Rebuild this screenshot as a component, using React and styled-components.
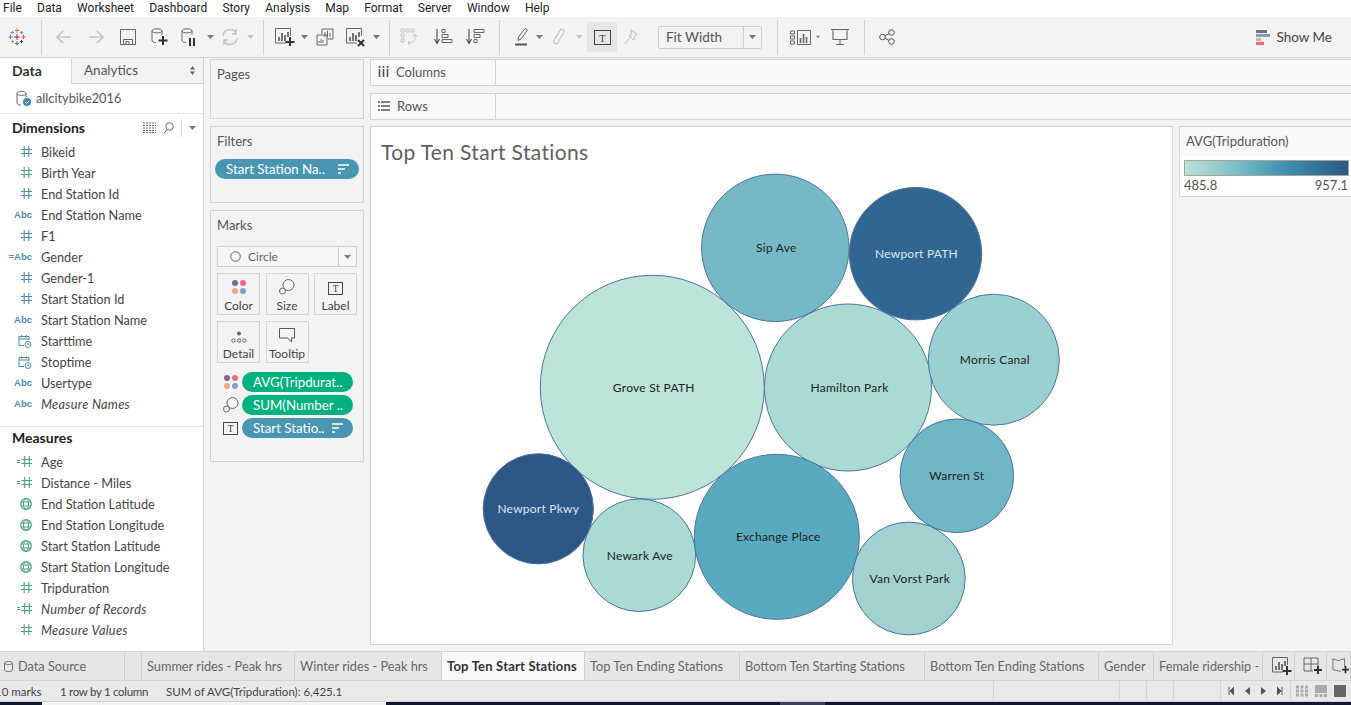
import React from "react";
import styled, { createGlobalStyle } from "styled-components";

const Global = createGlobalStyle`
  html, body { margin: 0; padding: 0; background: #f3f3f3; }
  * { box-sizing: border-box; }
  body { font-family: "Lato", "Open Sans", sans-serif; color: #444; overflow: hidden; }
`;

const Page = styled.div`
  width: 1351px; height: 705px; display: flex; flex-direction: column; overflow: hidden; background: #f3f3f3;
`;
const MenuBar = styled.div`
  height: 17px; background: #fff; display: flex; align-items: center; padding-left: 3px; gap: 15.2px; flex: none;
  font: 12px/17px "Roboto", "Open Sans", sans-serif; color: #222;
`;
const Toolbar = styled.div`
  height: 41px; background: #f3f3f3; border-bottom: 1px solid #d4d4d4; display: flex; align-items: center; flex: none;
`;
const Tool = styled.div`
  width: ${p => p.$w}px; height: 30px; flex: none; display: flex; align-items: center; justify-content: center;
  margin-left: ${p => p.$ml || 0}px; background: ${p => (p.$on ? "#e6e6e6" : "transparent")};
`;
const Sep = styled.div`
  width: 1px; height: 35px; background: #d2d2d2; flex: none; margin: 0 ${p => p.$r || 0}px 0 ${p => p.$l || 0}px;
`;
const FitBox = styled.div`
  width: 104px; height: 23px; margin-left: 13px; border: 1px solid #cfcfcf; border-radius: 2px; display: flex; align-items: center; flex: none;
  font-size: 13.5px; color: #555; padding-left: 7px;
`;
const FitLabel = styled.span`flex: 1;`;
const FitArrow = styled.span`
  width: 18px; height: 21px; border-left: 1px solid #cfcfcf; display: flex; align-items: center; justify-content: center; flex: none;
`;
const ShowMe = styled.div`
  margin-left: auto; margin-right: 19px; display: flex; align-items: center; gap: 6px; font-size: 13.5px; color: #444;
`;
const Main = styled.div`flex: 1; display: flex; min-height: 0;`;

const DataPane = styled.div`
  width: 204px; flex: none; background: #fff; border-right: 1px solid #d4d4d4; display: flex; flex-direction: column;
`;
const PaneTabs = styled.div`height: 26px; display: flex; flex: none; background: #f3f3f3;`;
const PaneTab = styled.div`
  height: 26px; display: flex; align-items: center; padding-bottom: 1px;
  ${p => p.$active
    ? `width: 72px; background: #fff; font-size: 14px; font-weight: 700; color: #333; padding-left: 12px; border-right: 1px solid #d4d4d4;`
    : `flex: 1; padding-left: 12px; padding-right: 8px; justify-content: space-between; font-size: 13.5px; color: #555; border-bottom: 1px solid #d4d4d4;`}
`;
const SourceRow = styled.div`
  height: 30px; display: flex; align-items: center; gap: 4px; padding: 0 0 1px 16px; border-bottom: 1px solid #e6e6e6; font-size: 12.75px; color: #555; flex: none;
`;
const SectionHead = styled.div`
  height: ${p => p.$h}px; display: flex; align-items: center; padding: 0 7px ${p => p.$pb || 0}px 12px; font-size: 14px; font-weight: 700; color: #222; flex: none;
`;
const HeadTools = styled.div`margin-left: auto; display: flex; align-items: center; gap: 7px;`;
const HeadSep = styled.span`width: 1px; height: 18px; background: #d8d8d8;`;
const Fields = styled.div`display: flex; flex-direction: column;`;
const Field = styled.div`
  height: 21px; display: flex; align-items: center; font-size: 12.75px; color: #444;
  font-style: ${p => (p.$italic ? "italic" : "normal")}; letter-spacing: ${p => (p.$italic ? ".3px" : "0")};
`;
const FieldIcon = styled.span`
  width: 41px; padding-right: 9px; flex: none; display: flex; justify-content: flex-end; align-items: center;
`;
const AbcIcon = styled.span`
  font: 700 9.5px "Liberation Sans", sans-serif; color: #4f8ca5; font-style: normal; letter-spacing: 0;
`;
const Divider = styled.div`height: 1px; background: #e6e6e6; margin-top: 12px; flex: none;`;

const CardsCol = styled.div`
  width: 154px; margin-left: 6px; flex: none; padding-top: 1px; display: flex; flex-direction: column; gap: 7px;
`;
const Card = styled.div`
  height: ${p => p.$h}px; flex: none; background: #f3f3f3; border: 1px solid #d4d4d4; padding: 6px 6px 0 6px;
`;
const CardTitle = styled.div`font-size: 13px; color: #555; height: 17px; line-height: 17px;`;
const Pill = styled.div`
  height: 20px; border-radius: 10px; background: ${p => (p.$green ? "#00b180" : "#4996b2")}; color: #fff;
  display: flex; align-items: center; justify-content: space-between; padding: 0 10px 0 11px; font-size: 13.3px; white-space: nowrap; flex: 1;
`;
const FilterPill = styled(Pill)`margin: 9px -2px 0 -2px;`;
const MarkSelect = styled.div`
  height: 21px; margin: 12px 0 6px; border: 1px solid #cfcfcf; display: flex; align-items: center; font-size: 12px; color: #666; padding-left: 12px; gap: 7px; background: #f6f6f6;
`;
const MarkArrow = styled.span`
  margin-left: auto; width: 18px; height: 19px; border-left: 1px solid #cfcfcf; display: flex; align-items: center; justify-content: center;
`;
const MarkGrid = styled.div`display: grid; grid-template-columns: 43px 43px 43px; column-gap: 5.5px; row-gap: 6px;`;
const MarkButton = styled.div`
  height: 42px; border: 1px solid #d4d4d4; display: flex; flex-direction: column; align-items: center; justify-content: flex-end; padding-bottom: 1px;
  font-size: 12px; color: #444; gap: 3px;
`;
const PillRows = styled.div`display: flex; flex-direction: column; gap: 3px; margin: 9px 4px 0 0;`;
const PillRow = styled.div`display: flex; align-items: center; gap: 3px;`;
const PillIcon = styled.span`width: 22px; flex: none; display: flex; justify-content: center; padding-left: 5px;`;

const Work = styled.div`flex: 1; margin-left: 6px; padding-top: 1px; display: flex; flex-direction: column; min-width: 0;`;
const Shelf = styled.div`
  height: 27px; flex: none; background: #f9f9f9; border: 1px solid #d4d4d4; border-right: 0; display: flex; margin-bottom: 7px;
`;
const ShelfLabel = styled.div`
  width: 125px; flex: none; border-right: 1px solid #d4d4d4; display: flex; align-items: center; gap: 7px; padding: 0 0 2px 7px; font-size: 13px; color: #555;
`;
const ViewRow = styled.div`display: flex; flex: none; margin-top: -1px;`;
const Canvas = styled.div`
  width: 803px; height: 519px; flex: none; background: #fff; border: 1px solid #d4d4d4; position: relative;
`;
const ViewTitle = styled.div`
  font-size: 21px; color: #5f5f5f; padding: 12px 0 0 10px; line-height: 26px; letter-spacing: .35px;
`;
const ChartSvg = styled.svg`position: absolute; left: 0; top: 0;`;
const ChartLabel = styled.text`
  font: 12px "Lato", sans-serif; letter-spacing: .25px; text-anchor: middle; dominant-baseline: central;
`;
const Legend = styled.div`
  margin-left: 6px; flex: 1; height: 71px; background: #fff; border: 1px solid #d4d4d4; border-right: 0;
`;
const LegendTitle = styled.div`
  height: 29px; background: #f9f9f9; font-size: 13px; color: #555; padding-left: 6px; line-height: 29px;
`;
const LegendBar = styled.div`
  height: 16px; margin: 4px 2px 0 4px; border: 1px solid #a9a596;
  background: linear-gradient(90deg, #bce4d9 0%, #7fc0c9 30%, #3f93b0 60%, #2c5885 100%);
`;
const LegendScale = styled.div`
  display: flex; justify-content: space-between; padding: 1px 3px 0 4px; font-size: 13px; color: #555; line-height: 16px;
`;

const Tabs = styled.div`
  height: 30px; flex: none; display: flex; background: #e6e6e6; border-top: 1px solid #d4d4d4; border-bottom: 1px solid #d4d4d4;
`;
const SheetTab = styled.div`
  width: ${p => p.$w}px; flex: none; display: flex; align-items: center; gap: 5px; padding-left: ${p => p.$pl ?? 5}px;
  border-right: 1px solid #d0d0d0; white-space: nowrap; overflow: hidden;
  font-size: ${p => (p.$active ? "13px" : "12.75px")}; letter-spacing: ${p => (p.$active ? ".2px" : "0")};
  color: ${p => (p.$active ? "#333" : "#666")}; font-weight: ${p => (p.$active ? 700 : 400)};
  background: ${p => (p.$active ? "#f9f9f9" : "transparent")};
`;
const Status = styled.div`
  height: 21px; flex: none; display: flex; align-items: center; background: #e9e9e9; font-size: 11.5px; color: #444; border-bottom: 1px solid #d0d0d0; overflow: hidden;
`;
const StatusText = styled.span`
  white-space: nowrap; width: ${p => p.$w}px; flex: none; margin-left: ${p => p.$ml || 0}px; letter-spacing: ${p => p.$ls || 0}px;
`;
const StatusSpacer = styled.div`flex: 1;`;
const StatusCell = styled.div`
  width: ${p => p.$w}px; height: 100%; border-left: 1px solid #d6d6d6; flex: none; display: flex; align-items: center; justify-content: center; gap: ${p => p.$gap || 0}px;
`;
const Footer = styled.div`height: 3px; flex: none; display: flex;`;
const FooterPart = styled.div`width: ${p => p.$w}px; background: ${p => p.$c}; flex: ${p => (p.$w ? "none" : 1)};`;

const D = "#666";
const L = "#c4c4c4";
const Svg = ({ w = 20, h = 20, children, ...r }) => (
  <svg width={w} height={h} viewBox={`0 0 ${w} ${h}`} fill="none" {...r}>{children}</svg>
);
const Caret = ({ c = "#777" }) => <Svg w={7} h={4}><path d="M0 0h7L3.500 4z" fill={c} /></Svg>;

const Logo = () => (
  <Svg w={18} h={18}>
    {[[9, 2.5, 2.2, "#e8762c"], [9, 15.5, 2.2, "#5b6591"], [2.5, 9, 2.2, "#59879b"], [15.5, 9, 2.2, "#e15759"], [9, 9, 2.8, "#c72035"], [4.5, 4.5, 1.6, "#7099a6"], [13.5, 4.5, 1.6, "#7099a6"], [4.5, 13.5, 1.6, "#eb912b"], [13.5, 13.5, 1.6, "#1f447e"]].map(([x, y, s, c], i) => (
      <path key={i} d={`M${x - s} ${y}h${2 * s}M${x} ${y - s}v${2 * s}`} stroke={c} strokeWidth="1" />
    ))}
  </Svg>
);
const Arrow = ({ flip }) => (
  <Svg w={18} h={14}>
    <path d={flip ? "M2 7h14M10 1l6 6-6 6" : "M16 7H2M8 1 2 7l6 6"} stroke={L} strokeWidth="1.700" />
  </Svg>
);
const Save = () => (
  <Svg w={18} h={18}><path d="M1.500 1.500h15v15h-15zM4.500 16.500v-5h9v5M7 16.500v-3h3v3" stroke={D} strokeWidth="1" /></Svg>
);
const Can = ({ badge }) => (
  <Svg w={20} h={20}>
    <path d="M2 4c0-3 10-3 10 0v4M2 4c0 2.500 10 2.500 10 0M2 4v9c0 2 2 2.500 4 2.500" stroke={D} strokeWidth="1" />
    {badge === "plus" && <path d="M13 9v9M8.500 13.500h9" stroke="#333" strokeWidth="2" />}
    {badge === "pause" && <path d="M10 11v8M14 11v8" stroke="#333" strokeWidth="2" />}
  </Svg>
);
const Refresh = () => (
  <Svg w={20} h={20}><path d="M3 9a7 7 0 0 1 13-3M17 11a7 7 0 0 1-13 3M16 2v5h-4M4 18v-5h4" stroke={L} strokeWidth="1.500" /></Svg>
);
const Chart = ({ x }) => (
  <Svg w={22} h={20}>
    <path d="M12 16H1.500V1.500h15V9" stroke={D} strokeWidth="1" />
    <path d="M5 14v-4M8 14V6M11 14V8M14 10V5" stroke="#555" strokeWidth="1.600" />
    {x ? <path d="m13 13 6 6m0-6-6 6" stroke="#333" strokeWidth="2" /> : <path d="M16 10v9M11.500 15h9" stroke="#333" strokeWidth="2" />}
  </Svg>
);
const Dup = () => (
  <Svg w={18} h={18}>
    <path d="M6 6V1h11v10h-5" stroke={D} /><path d="M1 7h10v10H1z" fill="#f3f3f3" stroke={D} />
    <path d="M9 9V4M11.500 9V2.500M14 9V5M3 15v-2M5 15v-4M7 15v-3" stroke={D} />
  </Svg>
);
const Swap = () => (
  <Svg w={20} h={20}>
    <path d="M1 2h3v3H1zM6 2h3v3H6zM11 2h3v3h-3zM1 7h3v3H1zM1 12h3v3H1z" stroke={L} />
    <path d="M15 8a6 6 0 0 1-6 8M17 10l-2-3-2 3M10 14l-2 2 2 2" stroke={L} />
  </Svg>
);
const Sort = ({ asc }) => (
  <Svg w={20} h={18}>
    <path d="M3 1v14M0.500 11 3 15.500 5.500 11" stroke="#555" strokeWidth="1.200" />
    {asc
      ? <path d="M8 1.500h3v3H8zM8 6.500h6v3H8zM8 11.500h10v3H8z" stroke="#666" />
      : <path d="M8 1.500h10v3H8zM8 6.500h6v3H8zM8 11.500h3v3H8z" stroke="#666" />}
  </Svg>
);
const Marker = () => (
  <Svg w={14} h={20}>
    <path d="M10 1.500 12.500 3 6 12l-3 1.500L3.500 10z" stroke="#666" />
    <path d="M0 17.500h12" stroke="#555" strokeWidth="2" />
  </Svg>
);
const Clip = () => (
  <Svg w={14} h={18}><path d="M2.500 11 8 2.500c1.500-2.200 5-.500 3.700 2L6 14.500c-1.500 2.500-5.500.800-4.200-2L7 4.500" stroke={L} strokeWidth="1.200" /></Svg>
);
const TBox = ({ s = 17, c = "#444" }) => (
  <Svg w={s} h={s - 2}>
    <rect x=".5" y=".5" width={s - 1} height={s - 3} stroke={c} />
    <text x={s / 2} y={s - 5.500} textAnchor="middle" fontFamily="Liberation Serif, serif" fontSize={s * .62} fill={c}>T</text>
  </Svg>
);
const Pin = () => (
  <Svg w={14} h={16}><path d="M7 1l6 4-2 1-1 4 0 1-5-4 2-.500zM5.500 9 1 15" stroke="#bbb" /></Svg>
);
const ShowMeSmall = () => (
  <Svg w={21} h={15}>
    <path d="M.500 1h4v3h-4zM.500 6h4v3h-4zM.500 11h4v3h-4zM7.500.500h13v14h-13z" stroke={D} />
    <path d="M10.500 13V8M13.500 13V4M16.500 13V7" stroke={D} strokeWidth="1.600" />
  </Svg>
);
const Present = () => (
  <Svg w={18} h={18}><path d="M0 1.500h18M2 1.500v10h14v-10M9 11.500v5M5 16.500h8" stroke={D} strokeWidth="1.100" /></Svg>
);
const Share = () => (
  <Svg w={16} h={16}>
    <circle cx="3.500" cy="8" r="2.800" stroke="#555" /><circle cx="12.500" cy="3.500" r="2.800" stroke="#555" /><circle cx="12.500" cy="12.500" r="2.800" stroke="#555" />
    <path d="m6 6.700 4-2M6 9.300l4 2" stroke="#555" />
  </Svg>
);
const ShowMeLogo = () => (
  <svg width="14" height="15" viewBox="0 0 14 15">
    <rect width="11" height="3" fill="#7b6a92" /><rect y="4" width="14" height="3" fill="#7e9fc9" />
    <rect y="8" width="5" height="3" fill="#f1a77f" /><rect y="12" width="8" height="3" fill="#f0687f" />
  </svg>
);
const UpDown = () => <Svg w={5} h={9}><path d="M0 3.500 2.500 0 5 3.500zM0 5.500h5L2.500 9z" fill="#666" /></Svg>;
const ColsIcon = () => <Svg w={11} h={11}><path d="M1.500 3v8M5.500 3v8M9.500 3v8M1.500 0v2M5.500 0v2M9.500 0v2" stroke="#555" strokeWidth="1.600" /></Svg>;
const RowsIcon = () => <Svg w={12} h={10}><path d="M3 1h9M3 5h9M3 9h9M0 1h2M0 5h2M0 9h2" stroke="#555" strokeWidth="1.300" /></Svg>;
const DbCheck = () => (
  <Svg w={16} h={17}>
    <path d="M1 3.500c0-3 9-3 9 0V7M1 3.500c0 2.500 9 2.500 9 0M1 3.500V13c0 1.500 2 2 4 2" stroke={D} />
    <circle cx="11" cy="12" r="4" fill="#3f8dae" /><path d="m9 12 1.500 1.500L13 11" stroke="#fff" />
  </Svg>
);
const Grid = () => (
  <Svg w={13} h={11}><path d="M0 1h13M0 3.500h13M0 6h13M0 8.500h13M0 10.500h13" stroke="#666" strokeDasharray="2 1" /></Svg>
);
const Search = () => <Svg w={11} h={12}><circle cx="6.500" cy="4.500" r="3.800" stroke="#666" /><path d="m4 7.500-3 4" stroke="#666" /></Svg>;

const BLUE = "#4f8ca5";
const GREEN = "#4aa283";
const Hash = ({ c, eq }) => (
  <Svg w={eq ? 15 : 11} h={11}>
    <g transform={eq ? "translate(4.500 0)" : undefined} stroke={c} strokeWidth="1.100">
      <path d="M3.200 0v11M7.800 0v11M0 3.500h11M0 7.500h11" />
    </g>
    {eq && <path d="M0 4.500h3M0 6.500h3" stroke={c} />}
  </Svg>
);
const Cal = () => (
  <Svg w={14} h={14}>
    <path d="M6 11.500H1V2.500h10V6M1 5h10M3.500 1v2.500M8.500 1v2.500" stroke={BLUE} />
    <circle cx="10" cy="10.500" r="3" fill="#fff" stroke={BLUE} /><path d="M10 9v1.700h1.500" stroke={BLUE} />
  </Svg>
);
const Globe = () => (
  <Svg w={12} h={12}>
    <circle cx="6" cy="6" r="5.300" stroke={GREEN} strokeWidth="1.200" />
    <ellipse cx="6" cy="6" rx="2.500" ry="5.300" stroke={GREEN} />
    <path d="M1 4h10M1 8h10" stroke={GREEN} />
  </Svg>
);
const typeIcon = {
  hash: <Hash c={BLUE} />, hashG: <Hash c={GREEN} />, eqG: <Hash c={GREEN} eq />,
  abc: <AbcIcon>Abc</AbcIcon>, eqAbc: <AbcIcon>=Abc</AbcIcon>, cal: <Cal />, globe: <Globe />,
};

const dims = [
  ["hash", "Bikeid"], ["hashG", "Birth Year"], ["hash", "End Station Id"], ["abc", "End Station Name"], ["hash", "F1"],
  ["eqAbc", "Gender"], ["hash", "Gender-1"], ["hash", "Start Station Id"], ["abc", "Start Station Name"], ["cal", "Starttime"],
  ["cal", "Stoptime"], ["abc", "Usertype"], ["abc", "Measure Names", true],
];
const meas = [
  ["eqG", "Age"], ["eqG", "Distance - Miles"], ["globe", "End Station Latitude"], ["globe", "End Station Longitude"],
  ["globe", "Start Station Latitude"], ["globe", "Start Station Longitude"], ["hashG", "Tripduration"],
  ["eqG", "Number of Records", true], ["hashG", "Measure Values", true],
];

const Dots = () => (
  <Svg w={16} h={16}>
    <circle cx="4" cy="4" r="3" fill="#7b6a92" /><circle cx="12" cy="4" r="3" fill="#f0687f" />
    <circle cx="4" cy="12" r="3" fill="#f1a77f" /><circle cx="12" cy="12" r="3" fill="#7e9fc9" />
  </Svg>
);
const SizeIcon = () => (
  <Svg w={16} h={16}>
    <circle cx="9.500" cy="6" r="5.500" fill="#f3f3f3" stroke="#666" /><circle cx="3.500" cy="12" r="3" fill="#f3f3f3" stroke="#666" />
  </Svg>
);
const DetailIcon = () => (
  <Svg w={16} h={12}>
    <circle cx="8" cy="2.500" r="2" fill="#666" />
    <circle cx="2.500" cy="9.500" r="1.700" stroke="#666" /><circle cx="8" cy="9.500" r="1.700" stroke="#666" /><circle cx="13.500" cy="9.500" r="1.700" stroke="#666" />
  </Svg>
);
const TipIcon = () => (
  <Svg w={16} h={15}><path d="M.500.500h15v9.500h-3v4l-4-4H.500z" stroke="#555" /></Svg>
);
const SortLines = () => (
  <Svg w={11} h={10}><path d="M0 1h11M0 5h7M0 9h3" stroke="#fff" strokeWidth="1.700" /></Svg>
);

const circles = [
  ["Sip Ave", 775.3, 247.8, 73.7, "#76b9c6", "#222", 1],
  ["Newport PATH", 915.5, 253.7, 66.2, "#316690", "#dfe6ee", 1],
  ["Grove St PATH", 652.3, 387.3, 112, "#bce4d9", "#222", 1.5],
  ["Hamilton Park", 848, 387.5, 83.5, "#a9dad4", "#222", 1.5],
  ["Morris Canal", 993.8, 359.7, 65.5, "#9bd0d1", "#222", 1],
  ["Warren St", 956.8, 475.8, 56.8, "#6fb6c6", "#222", 0],
  ["Exchange Place", 776.8, 536.8, 82.5, "#59a9bf", "#222", 1.5],
  ["Van Vorst Park", 908.8, 578.5, 56.4, "#a1d2d0", "#222", 1],
  ["Newark Ave", 639.3, 555.2, 56.3, "#a9dad4", "#222", 0.5],
  ["Newport Pkwy", 538.3, 508.8, 55.1, "#2c5885", "#dfe6ee", 0],
];

const tabs = [
  [153, "Summer rides - Peak hrs"], [147, "Winter rides - Peak hrs"], [143, "Top Ten Start Stations", true],
  [155, "Top Ten Ending Stations"], [185, "Bottom Ten Starting Stations"], [174, "Bottom Ten Ending Stations"], [55, "Gender"], [109, "Female ridership - Week"],
];

export default function App() {
  return (
    <Page>
      <Global />
      <MenuBar>
        {["File", "Data", "Worksheet", "Dashboard", "Story", "Analysis", "Map", "Format", "Server", "Window", "Help"].map(m => <span key={m}>{m}</span>)}
      </MenuBar>
      <Toolbar>
        <Tool $w={34}><Logo /></Tool>
        <Sep $l={7} $r={6} />
        <Tool $w={32}><Arrow /></Tool>
        <Tool $w={32}><Arrow flip /></Tool>
        <Tool $w={32}><Save /></Tool>
        <Tool $w={32}><Can badge="plus" /></Tool>
        <Tool $w={28}><Can badge="pause" /></Tool>
        <Tool $w={12}><Caret /></Tool>
        <Tool $w={27}><Refresh /></Tool>
        <Tool $w={14}><Caret c={L} /></Tool>
        <Sep $l={6} $r={6} />
        <Tool $w={30}><Chart /></Tool>
        <Tool $w={9}><Caret /></Tool>
        <Tool $w={32}><Dup /></Tool>
        <Tool $w={30}><Chart x /></Tool>
        <Tool $w={10}><Caret /></Tool>
        <Sep $l={8} $r={5} />
        <Tool $w={30}><Swap /></Tool>
        <Tool $w={30} $ml={4}><Sort asc /></Tool>
        <Tool $w={30} $ml={2}><Sort /></Tool>
        <Sep $l={8} $r={8} />
        <Tool $w={28}><Marker /></Tool>
        <Tool $w={7}><Caret /></Tool>
        <Tool $w={32}><Clip /></Tool>
        <Tool $w={8}><Caret c={L} /></Tool>
        <Tool $w={30} $ml={4} $on><TBox /></Tool>
        <Tool $w={28}><Pin /></Tool>
        <FitBox><FitLabel>Fit Width</FitLabel><FitArrow><Caret /></FitArrow></FitBox>
        <Sep $l={15} $r={6} />
        <Tool $w={32}><ShowMeSmall /></Tool>
        <Tool $w={4}><Caret /></Tool>
        <Tool $w={36} $ml={2}><Present /></Tool>
        <Sep $l={6} $r={6} />
        <Tool $w={32}><Share /></Tool>
        <ShowMe><ShowMeLogo />Show Me</ShowMe>
      </Toolbar>
      <Main>
        <DataPane>
          <PaneTabs>
            <PaneTab $active>Data</PaneTab>
            <PaneTab>Analytics<UpDown /></PaneTab>
          </PaneTabs>
          <SourceRow><DbCheck />allcitybike2016</SourceRow>
          <SectionHead $h={27}>
            Dimensions
            <HeadTools><Grid /><Search /><HeadSep /><Caret /></HeadTools>
          </SectionHead>
          <Fields>
            {dims.map(([t, n, i]) => <Field key={n} $italic={i}><FieldIcon>{typeIcon[t]}</FieldIcon>{n}</Field>)}
          </Fields>
          <Divider />
          <SectionHead $h={24} $pb={3}>Measures</SectionHead>
          <Fields>
            {meas.map(([t, n, i]) => <Field key={n} $italic={i}><FieldIcon>{typeIcon[t]}</FieldIcon>{n}</Field>)}
          </Fields>
        </DataPane>
        <CardsCol>
          <Card $h={60}><CardTitle>Pages</CardTitle></Card>
          <Card $h={77}>
            <CardTitle>Filters</CardTitle>
            <FilterPill>Start Station Na..<SortLines /></FilterPill>
          </Card>
          <Card $h={252}>
            <CardTitle>Marks</CardTitle>
            <MarkSelect>
              <Svg w={11} h={11}><circle cx="5.500" cy="5.500" r="4.800" stroke="#666" /></Svg>
              Circle
              <MarkArrow><Caret /></MarkArrow>
            </MarkSelect>
            <MarkGrid>
              <MarkButton><Dots />Color</MarkButton>
              <MarkButton><SizeIcon />Size</MarkButton>
              <MarkButton><TBox s={15} />Label</MarkButton>
              <MarkButton><DetailIcon />Detail</MarkButton>
              <MarkButton><TipIcon />Tooltip</MarkButton>
            </MarkGrid>
            <PillRows>
              <PillRow><PillIcon><Dots /></PillIcon><Pill $green>AVG(Tripdurat..</Pill></PillRow>
              <PillRow><PillIcon><SizeIcon /></PillIcon><Pill $green>SUM(Number ..</Pill></PillRow>
              <PillRow><PillIcon><TBox s={15} /></PillIcon><Pill>Start Statio..<SortLines /></Pill></PillRow>
            </PillRows>
          </Card>
        </CardsCol>
        <Work>
          <Shelf><ShelfLabel><ColsIcon />Columns</ShelfLabel></Shelf>
          <Shelf><ShelfLabel><RowsIcon />Rows</ShelfLabel></Shelf>
          <ViewRow>
            <Canvas>
              <ViewTitle>Top Ten Start Stations</ViewTitle>
              <ChartSvg width="801" height="517" viewBox="371 127 801 517">
                {circles.map(([n, x, y, r, c]) => (
                  <circle key={n} cx={x} cy={y} r={r} fill={c} stroke="#4e72a0" strokeWidth="1" />
                ))}
                {circles.map(([n, x, y, , , t, dx]) => (
                  <ChartLabel key={n} x={x + dx} y={y} fill={t}>{n}</ChartLabel>
                ))}
              </ChartSvg>
            </Canvas>
            <Legend>
              <LegendTitle>AVG(Tripduration)</LegendTitle>
              <LegendBar />
              <LegendScale><span>485.8</span><span>957.1</span></LegendScale>
            </Legend>
          </ViewRow>
        </Work>
      </Main>
      <Tabs>
        <SheetTab $w={125} $pl={4}>
          <Svg w={9} h={11}><path d="M.500 2c0-2 8-2 8 0v7c0 2-8 2-8 0zM.500 2c0 2 8 2 8 0" stroke="#777" /></Svg>
          Data Source
        </SheetTab>
        <SheetTab $w={17} />
        {tabs.map(([w, n, act]) => <SheetTab key={n} $w={w} $active={act}>{n}</SheetTab>)}
        <SheetTab $w={32} $pl={8}><Chart /></SheetTab>
        <SheetTab $w={32} $pl={8}>
          <Svg w={20} h={20}><path d="M10 15H1V2h14v9M1 8h14M8 2v13" stroke={D} /><path d="M15 10v8M11 14h8" stroke="#333" strokeWidth="2" /></Svg>
        </SheetTab>
        <SheetTab $w={24} $pl={5}>
          <Svg w={20} h={20}><path d="M10 16 1 14V2l6 2 7-2v9" stroke={D} /><path d="M15 10v8M11 14h8" stroke="#333" strokeWidth="2" /></Svg>
        </SheetTab>
      </Tabs>
      <Status>
        <StatusText $w={65} $ml={-5}>10 marks</StatusText>
        <StatusText $w={106} $ls={-0.3}>1 row by 1 column</StatusText>
        <StatusText $w={190}>SUM of AVG(Tripduration): 6,425.1</StatusText>
        <StatusSpacer />
        <StatusCell $w={126} />
        <StatusCell $w={27} />
        <StatusCell $w={27} />
        <StatusCell $w={47} />
        <StatusCell $w={70} $gap={11}>
          <Svg w={6} h={8}><path d="M1 0v8M6 0v8L2 4z" stroke="#555" fill="#555" /></Svg>
          <Svg w={5} h={8}><path d="M5 0v8L0 4z" fill="#555" /></Svg>
          <Svg w={5} h={8}><path d="M0 0v8l5-4z" fill="#555" /></Svg>
          <Svg w={6} h={8}><path d="M5 0v8M0 0v8l4-4z" stroke="#555" fill="#555" /></Svg>
        </StatusCell>
        <StatusCell $w={61} $gap={7}>
          <Svg w={12} h={12}><path d="M0 2h12M0 6h12M0 10h12" stroke="#aaa" strokeWidth="3" strokeDasharray="3 1.500" /></Svg>
          <Svg w={12} h={12}><rect width="12" height="8" fill="#aaa" /><path d="M0 10.500h12" stroke="#aaa" strokeWidth="3" strokeDasharray="3 1.500" /></Svg>
          <Svg w={12} h={12}><rect width="12" height="12" fill="#666" /></Svg>
        </StatusCell>
      </Status>
      <Footer>
        <FooterPart $w={42} $c="#0f1a30" />
        <FooterPart $w={344} $c="#f3f3f3" />
        <FooterPart $w={394} $c="#0f1a30" />
        <FooterPart $w={45} $c="#3a4458" />
        <FooterPart $c="#0f1a30" />
      </Footer>
    </Page>
  );
}
